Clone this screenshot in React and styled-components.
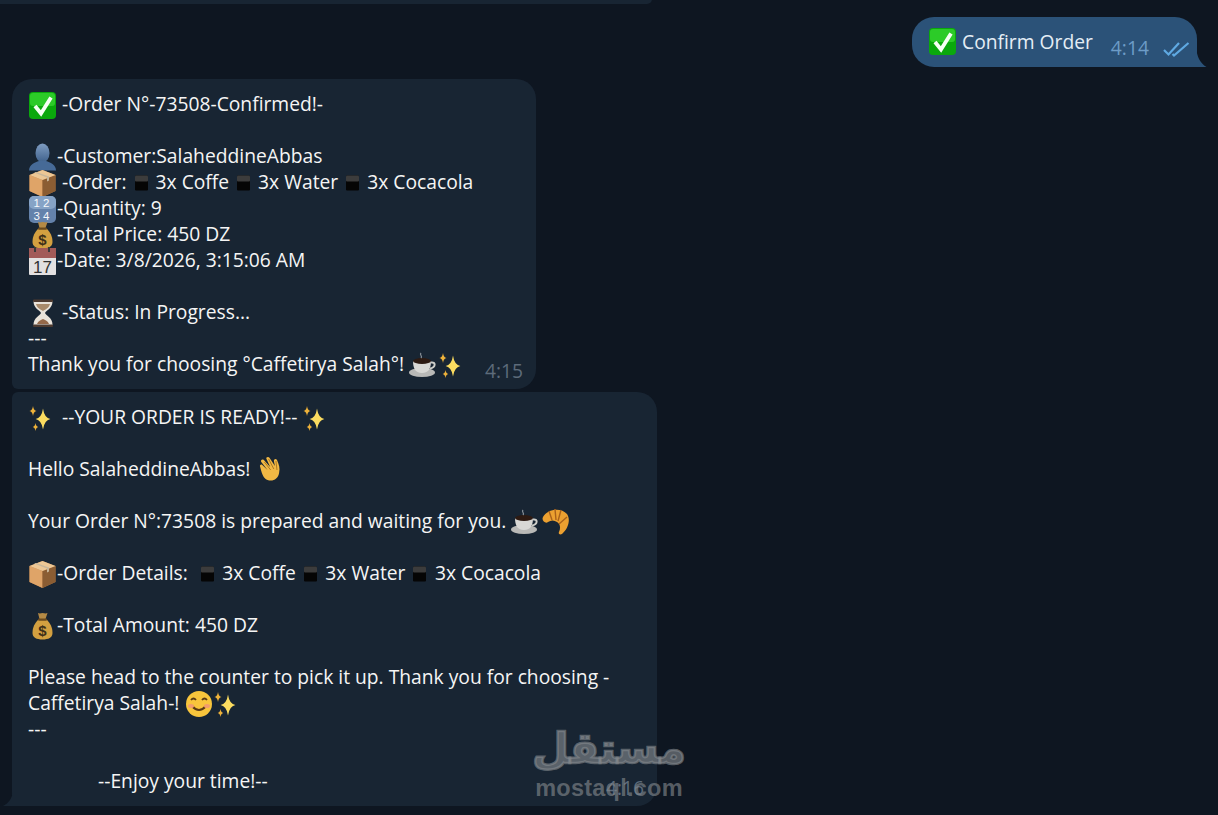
import React from "react";
import styled, { createGlobalStyle } from "styled-components";

const Global = createGlobalStyle`
  html, body { margin: 0; padding: 0; background: #0e1621; }
  body { font-family: "Open Sans", "Noto Sans", sans-serif; }
`;

const Chat = styled.main`
  position: relative;
  width: 1218px;
  height: 815px;
  overflow: hidden;
  background: #0e1621;
  display: flex;
  flex-direction: column;
  align-items: flex-start;
  padding-left: 12px;
  box-sizing: border-box;
`;

const PreviousBubble = styled.div`
  width: 652px;
  height: 5px;
  background: #182533;
  border-radius: 0 0 18px 0;
  margin: -1px 0 0 -12px;
  flex: none;
`;

const OutRow = styled.div`
  align-self: flex-end;
  display: flex;
  margin: 13px 21px 12px 0;
  position: relative;
`;

const OutBubble = styled.div`
  display: flex;
  height: 50px;
  box-sizing: border-box;
  width: 285px;
  padding: 12px 0 12px 16px;
  background: #2b5278;
  border-radius: 22px 22px 0 22px;
  color: #f5f5f5;
  font-size: 19.25px;
  line-height: 26px;
  white-space: pre;
`;

const OutLabel = styled.span`
  color: #e4edf5;
`;

const Tail = styled.svg`
  position: absolute;
  right: -10px;
  bottom: 0;
  width: 11px;
  height: 20px;
`;

const OutTime = styled.span`
  color: #6d9cc7;
  margin: 6px 14px 0 18px;
  line-height: 26px;
`;

const Checks = styled.svg`
  width: 27px;
  height: 16px;
  margin-top: 12px;
  flex: none;
`;

const Bubble = styled.div`
  position: relative;
  box-sizing: border-box;
  width: ${(p) => p.$width}px;
  padding: 12px 16px;
  background: #182533;
  border-radius: ${(p) => p.$radius};
  color: #f5f5f5;
  font-size: 19.25px;
  line-height: 26px;
  margin-bottom: 3px;
  flex: none;
`;

const Line = styled.div`
  height: 26px;
  white-space: pre;
  padding-left: ${(p) => p.$indent || 0}px;
`;

const Time = styled.span`
  position: absolute;
  right: 13px;
  bottom: ${(p) => p.$bottom}px;
  color: #5d6b7a;
  font-size: 19.25px;
  line-height: 26px;
`;

const BubbleTail = styled.svg`
  position: absolute;
  left: -10px;
  bottom: 0;
  width: 11px;
  height: 14px;
`;

const Mark = styled.div`
  position: absolute;
  left: 535px;
  top: 721px;
  width: 148px;
  display: flex;
  flex-direction: column;
  align-items: center;
  color: rgba(130, 135, 140, 0.64);
  pointer-events: none;
`;

const MarkArabic = styled.div`
  font-family: "DejaVu Sans", sans-serif;
  font-weight: 700;
  font-size: 42px;
  line-height: 56px;
  height: 56px;
  white-space: nowrap;
  -webkit-text-stroke: 2.4px currentColor;
`;

const MarkLatin = styled.div`
  font-family: "Liberation Sans", sans-serif;
  font-weight: 700;
  font-size: 23.5px;
  line-height: 22px;
  letter-spacing: 0.25px;
  white-space: nowrap;
`;

const EmojiSvg = styled.svg`
  display: inline-block;
  width: ${(p) => p.$w || 29}px;
  height: 28px;
  vertical-align: -6px;
  margin: -2px 0;
  overflow: visible;
`;

const Check = () => (
  <EmojiSvg viewBox="0 0 29 28">
    <rect x="1" y="1" width="27" height="27" rx="4" fill="#0aa80c" />
    <rect x="2" y="2" width="25" height="13" rx="3" fill="#2ccb28" />
    <path d="M7 15l6 7.500L23 6.500" fill="none" stroke="#f6fff4" strokeWidth="3.800" />
  </EmojiSvg>
);
const Person = () => (
  <EmojiSvg viewBox="0 0 29 28">
    <defs>
      <linearGradient id="pg" x1="0" y1="0" x2="0" y2="1">
        <stop offset="0" stopColor="#7f9dc2" />
        <stop offset="1" stopColor="#3f618c" />
      </linearGradient>
    </defs>
    <ellipse cx="14.500" cy="10" rx="7" ry="9.500" fill="url(#pg)" />
    <path d="M1 27.500c0-6 6-8 10-9.500h7c4 1.500 10 3.500 10 9.500z" fill="#466a97" />
  </EmojiSvg>
);
const Box = () => (
  <EmojiSvg viewBox="0 0 29 28">
    <path d="M14.500 1l13 5v16l-13 6-13-6V6z" fill="#b07a45" />
    <path d="M1.500 6l13 5v17l-13-6z" fill="#dfa468" />
    <path d="M14.500 11l13-5v16l-13 6z" fill="#8b5d33" />
    <path d="M14.500 1l13 5-13 5-13-5z" fill="#edc795" />
    <path d="M6 3.500l13 5v4l2-1v-4L8 3z" fill="#c9b79b" />
  </EmojiSvg>
);
const Numbers = () => (
  <EmojiSvg viewBox="0 0 29 28">
    <rect x="1" y="1" width="27" height="27" rx="5" fill="#6482ab" />
    <rect x="1" y="1" width="27" height="13" rx="5" fill="#86a3c6" />
    <text x="15" y="12" textAnchor="middle" fontSize="11.500" fontFamily="Liberation Sans" fill="#f6f8fb" letterSpacing="3">12</text>
    <text x="15" y="25" textAnchor="middle" fontSize="11.500" fontFamily="Liberation Sans" fill="#f6f8fb" letterSpacing="3">34</text>
  </EmojiSvg>
);
const Money = () => (
  <EmojiSvg viewBox="0 0 29 28">
    <path d="M10 1c2 1 3 0 4.500 0s3 1 5 0l-2 6h-6z" fill="#b48a45" />
    <path d="M10.500 7.500C7 11 4.500 15 4.500 21c0 4.500 4 6.500 10 6.500s10-2 10-6.500c0-6-2.500-10-6-13.500z" fill="#d3a040" />
    <rect x="10" y="6.500" width="9" height="2.200" rx="1" fill="#6a4a1e" />
    <text x="14.500" y="24" textAnchor="middle" fontSize="15" fontWeight="700" fontFamily="Liberation Sans" fill="#3d2f18">$</text>
  </EmojiSvg>
);
const Calendar = () => (
  <EmojiSvg viewBox="0 0 29 28">
    <rect x="1" y="1" width="27" height="27" rx="1" fill="#e3e1e1" />
    <rect x="1" y="1" width="27" height="10" fill="#a25a58" />
    <rect x="6" y="0" width="2" height="5" fill="#3a3a3a" />
    <rect x="20" y="0" width="2" height="5" fill="#3a3a3a" />
    <text x="14.500" y="26" textAnchor="middle" fontSize="17" fontFamily="Liberation Sans" fill="#333">17</text>
  </EmojiSvg>
);
const Hourglass = () => (
  <EmojiSvg viewBox="0 0 29 28">
    <path d="M5.500 2h19c0 8-6.500 9-7.500 12 1 3 7.500 4 7.500 12h-19c0-8 6.500-9 7.500-12-1-3-7.500-4-7.500-12z" fill="#e9e3da" />
    <path d="M8 5h14c-1 4-4 5-7 7-3-2-6-3-7-7z" fill="#a98a6a" />
    <path d="M9 25c1-3 4-4 6-5 2 1 5 2 6 5z" fill="#95694a" />
    <rect x="5" y="0.500" width="20" height="2.500" rx="1" fill="#4d3a30" />
    <rect x="5" y="25.500" width="20" height="2.500" rx="1" fill="#4d3a30" />
  </EmojiSvg>
);
const Coffee = () => (
  <EmojiSvg viewBox="0 0 29 28">
    <ellipse cx="13" cy="21.500" rx="13" ry="4.500" fill="#b9b9b7" />
    <path d="M4 10h18c0 7-2 12-9 12S4 17 4 10z" fill="#d9d8d5" />
    <path d="M22 11.500c5-1 5 5-1 6" fill="none" stroke="#cfcfcb" strokeWidth="2" />
    <ellipse cx="13" cy="10" rx="9" ry="3" fill="#2d1a12" />
    <path d="M12 2c-2 2 2 3 0 5" fill="none" stroke="#8b929a" strokeWidth="1.200" />
  </EmojiSvg>
);
const star = (cx, cy, r) => `M${cx} ${cy - r}Q${cx + r * 0.12} ${cy - r * 0.12} ${cx + r * 0.7} ${cy}Q${cx + r * 0.12} ${cy + r * 0.12} ${cx} ${cy + r}Q${cx - r * 0.12} ${cy + r * 0.12} ${cx - r * 0.7} ${cy}Q${cx - r * 0.12} ${cy - r * 0.12} ${cx} ${cy - r}z`;
const Sparkles = () => (
  <EmojiSvg viewBox="0 0 29 28">
    <path d={star(15, 15, 10.500)} fill="#fbdc60" />
    <path d={star(5, 7, 5)} fill="#eeb23a" />
    <path d={star(7.500, 23, 4)} fill="#eeb23a" />
  </EmojiSvg>
);
const Wave = () => (
  <EmojiSvg viewBox="0 0 29 28">
    <g transform="translate(1 0) scale(1.050 1)">
      <path d="M4 11c-1-2 1-3 2-2l5 5-6-8c-1-2 1-3 2.500-2l6 7-3.500-8c-1-2 2-3 3-1l5 8-1-5c0-2 2-3 3-1 2 5 3 8 2 13-1 6-6 9-11 7-3-1-5-4-7-13z" fill="#f1b844" />
      <path d="M8 6l6 8M12 3l5 10M19 5l1 9" fill="none" stroke="#a8741e" strokeWidth="0.900" />
    </g>
  </EmojiSvg>
);
const Croissant = () => (
  <EmojiSvg viewBox="0 0 29 28">
    <path d="M3 9C7 1 21-1 27 6c4 6 1 15-5 20-2 1-4 0-3-2 2-5 1-8-2-10-3-2-6-2-9 0-2 2-7-1-5-5z" fill="#eca030" />
    <path d="M9 3l3 9M15 1l1 11M21 2l-3 11M27 9l-8 7" fill="none" stroke="#a9611a" strokeWidth="1.400" />
  </EmojiSvg>
);
const Smile = () => (
  <EmojiSvg viewBox="0 0 29 28">
    <circle cx="15" cy="14" r="13" fill="#f8c53c" />
    <path d="M7 10q2.500-3 5 0M18 10q2.500-3 5 0" fill="none" stroke="#5a3a15" strokeWidth="1.800" />
    <path d="M8 16q7 8 14 0" fill="none" stroke="#5a3a15" strokeWidth="2" />
    <ellipse cx="7" cy="16" rx="3" ry="2" fill="#f29c6c" />
    <ellipse cx="23" cy="16" rx="3" ry="2" fill="#f29c6c" />
  </EmojiSvg>
);
const Square = ({ w = 19 }) => (
  <EmojiSvg $w={w} viewBox={`0 0 ${w} 28`}>
    <rect x="3" y="6.500" width="13" height="15" rx="1" fill="#050505" />
    <rect x="3" y="6.500" width="13" height="6" rx="1" fill="#3c3c3c" />
  </EmojiSvg>
);

export default function App() {
  return (
    <Chat>
      <Global />
      <PreviousBubble />
      <OutRow>
        <OutBubble>
          <Check />
          <OutLabel> Confirm Order</OutLabel>
          <OutTime>4:14</OutTime>
          <Checks viewBox="0 0 27 16">
            <path d="M1 9l4.500 4.500L16 2M9.500 13L11 14.500 25.500 2" fill="none" stroke="#5fa9e2" strokeWidth="2.200" />
          </Checks>
        </OutBubble>
        <Tail viewBox="0 0 11 20">
          <path d="M0 0c1 10 4 16 10.500 20H0z" fill="#2b5278" />
        </Tail>
      </OutRow>
      <Bubble $width={524} $radius="20px 20px 20px 6px">
        <Line><Check /> -Order N°-73508-Confirmed!-</Line>
        <Line />
        <Line><Person />-Customer:SalaheddineAbbas</Line>
        <Line><Box /> -Order: <Square /> 3x Coffe <Square /> 3x Water <Square /> 3x Cocacola</Line>
        <Line><Numbers />-Quantity: 9</Line>
        <Line><Money />-Total Price: 450 DZ</Line>
        <Line><Calendar />-Date: 3/8/2026, 3:15:06 AM</Line>
        <Line />
        <Line><Hourglass /> -Status: In Progress...</Line>
        <Line>---</Line>
        <Line>Thank you for choosing °Caffetirya Salah°! <Coffee /><Sparkles /></Line>
        <Time $bottom={5}>4:15</Time>
      </Bubble>
      <Bubble $width={645} $radius="6px 20px 20px 0">
        <Line><Sparkles /> --YOUR ORDER IS READY!-- <Sparkles /></Line>
        <Line />
        <Line>Hello SalaheddineAbbas! <Wave /></Line>
        <Line />
        <Line>Your Order N°:73508 is prepared and waiting for you. <Coffee /><Croissant /></Line>
        <Line />
        <Line><Box />-Order Details:  <Square w={19.5} /> 3x Coffe <Square w={19.5} /> 3x Water <Square w={19.5} /> 3x Cocacola</Line>
        <Line />
        <Line><Money />-Total Amount: 450 DZ</Line>
        <Line />
        <Line>Please head to the counter to pick it up. Thank you for choosing -</Line>
        <Line>Caffetirya Salah-! <Smile /><Sparkles /></Line>
        <Line>---</Line>
        <Line />
        <Line $indent={70}>--Enjoy your time!--</Line>
        <Time $bottom={5}>4:16</Time>
        <BubbleTail viewBox="0 0 11 14">
          <path d="M11 0C10 6 7 11 1 14h10z" fill="#182533" />
        </BubbleTail>
      </Bubble>
      <Mark>
        <MarkArabic>مستقل</MarkArabic>
        <MarkLatin>mostaql.com</MarkLatin>
      </Mark>
    </Chat>
  );
}
